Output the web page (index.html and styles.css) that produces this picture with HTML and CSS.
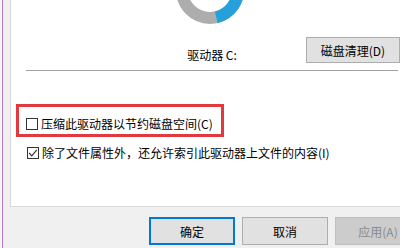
FILE: index.html
```html
<!DOCTYPE html>
<html lang="zh-CN">
<head>
<meta charset="utf-8">
<link rel="stylesheet" href="styles.css">
</head>
<body>
<div class="window">
  <div class="edge"></div>
  <div class="main">
    <div class="panel">
      <div class="top">
        <div class="chart">
          <svg class="donut" width="80" height="26" viewBox="-40 10 80 26">
            <circle cx="0" cy="0" r="28" fill="none" stroke="#adadad" stroke-width="12"/>
            <path d="M 0 -28 A 28 28 0 0 1 6.3 27.28" fill="none" stroke="#26a0da" stroke-width="12"/>
          </svg>
          <div class="drive">驱动器 C:</div>
        </div>
        <div class="btn clean">磁盘清理(D)</div>
      </div>
      <div class="sep"></div>
      <div class="highlight">
        <div class="check-row">
          <span class="box"></span>
          <span class="label">压缩此驱动器以节约磁盘空间(C)</span>
        </div>
      </div>
      <div class="check-row second">
        <span class="box">
          <svg width="12" height="12" viewBox="0 0 12 12"><path d="M2.2 6 L4.8 8.8 L9.8 2.8" fill="none" stroke="#333" stroke-width="1.2"/></svg>
        </span>
        <span class="label">除了文件属性外，还允许索引此驱动器上文件的内容(I)</span>
      </div>
    </div>
    <div class="footer">
      <div class="btn ok">确定</div>
      <div class="btn">取消</div>
      <div class="btn disabled">应用(A)</div>
    </div>
  </div>
</div>
</body>
</html>
```
FILE: styles.css
```css
html, body {
  margin: 0;
  padding: 0;
  width: 400px;
  height: 248px;
  overflow: hidden;
  background: #f0f0f0;
  font-family: "Noto Sans CJK SC", "Noto Sans", sans-serif;
  font-size: 12px;
  color: #000;
}
.window {
  display: flex;
  height: 248px;
}
.edge {
  width: 2px;
  flex: none;
  background: #f7f7f7;
  border-right: 1px solid #b27fc6;
}
.main {
  flex: 1;
  padding-left: 7px;
  display: flex;
  flex-direction: column;
  min-width: 0;
  overflow: hidden;
}
.panel {
  height: 207px;
  box-sizing: border-box;
  background: #fff;
  border-left: 1px solid #d9d9d9;
  border-bottom: 1px solid #d9d9d9;
}
.top {
  display: flex;
  align-items: flex-start;
}
.chart {
  margin-left: 131px;
  width: 138px;
  display: flex;
  flex-direction: column;
  align-items: center;
}
.donut {
  display: block;
  margin-left: -2px;
}
.drive {
  margin-top: 21px;
  line-height: 16px;
  padding-left: 2px;
}
.btn {
  box-sizing: border-box;
  width: 86px;
  height: 28px;
  background: #e1e1e1;
  border: 1px solid #adadad;
  display: flex;
  align-items: center;
  justify-content: center;
  flex: none;
}
.clean {
  margin-left: 26px;
  margin-top: 37px;
  width: 94px;
  height: 26px;
}
.sep {
  margin: 7px 0 0 15px;
  width: 372px;
  height: 1px;
  background: #a0a0a0;
}
.highlight {
  margin: 33px 0 0 5px;
  width: 208px;
  height: 33px;
  box-sizing: border-box;
  border: 3px solid #e0393e;
  padding: 6px 0 0 7px;
  display: flex;
  align-items: center;
}
.check-row {
  display: flex;
  align-items: center;
  height: 16px;
}
.check-row.second {
  margin: 8px 0 0 16px;
}
.box {
  width: 12px;
  height: 12px;
  border: 1px solid #333;
  box-sizing: border-box;
  background: #fff;
  display: block;
  flex: none;
  position: relative;
}
.box svg {
  position: absolute;
  left: -1px;
  top: -1px;
}
.label {
  margin-left: 3px;
  line-height: 16px;
  white-space: nowrap;
}
.footer {
  display: flex;
  gap: 7px;
  margin: 10px 0 0 139px;
}
.ok {
  border: 2px solid #0078d7;
}
.disabled {
  background: #cccccc;
  border-color: #bfbfbf;
  color: #8a8a8a;
}
```
